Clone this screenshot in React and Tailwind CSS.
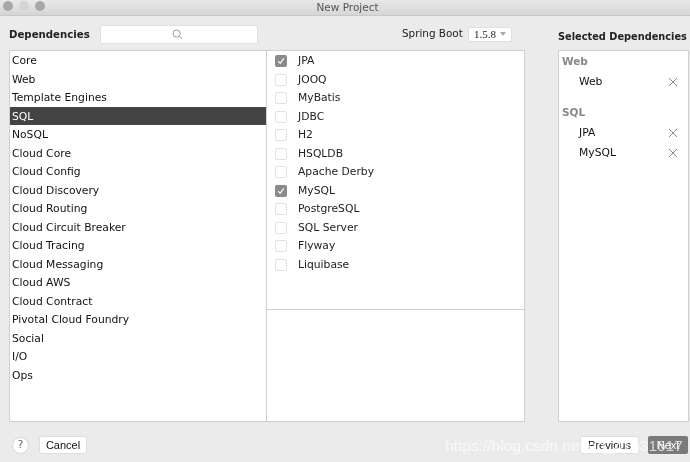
const font = { fontFamily: '"DejaVu Sans", sans-serif' };

const categories = ["Core", "Web", "Template Engines", "SQL", "NoSQL", "Cloud Core", "Cloud Config", "Cloud Discovery", "Cloud Routing", "Cloud Circuit Breaker", "Cloud Tracing", "Cloud Messaging", "Cloud AWS", "Cloud Contract", "Pivotal Cloud Foundry", "Social", "I/O", "Ops"];

const deps = [
  ["JPA", true],
  ["JOOQ", false],
  ["MyBatis", false],
  ["JDBC", false],
  ["H2", false],
  ["HSQLDB", false],
  ["Apache Derby", false],
  ["MySQL", true],
  ["PostgreSQL", false],
  ["SQL Server", false],
  ["Flyway", false],
  ["Liquibase", false],
];

function Checkbox({ checked }) {
  if (checked) {
    return (
      <span className="w-[12px] h-[12px] rounded-[2px] bg-[#8a8a8a] flex items-center justify-center shrink-0">
        <svg width="8" height="8" viewBox="0 0 8 8" fill="none" stroke="#fff" strokeWidth="1.2">
          <path d="M1.2 4.2 L3.2 6.3 L6.8 1.4" />
        </svg>
      </span>
    );
  }
  return <span className="w-[12px] h-[12px] rounded-[2px] bg-white border border-[#e2e2e2] shrink-0" />;
}

function Cross() {
  return (
    <svg width="10" height="10" viewBox="0 0 10 10" stroke="#8c8c8c" strokeWidth="1" fill="none">
      <path d="M1 1 L9 9 M9 1 L1 9" />
    </svg>
  );
}

function SelectedRow({ name }) {
  return (
    <div className="h-[20px] flex items-center justify-between pl-[20px] pr-[10px] text-[10.75px] text-[#111]">
      <span>{name}</span>
      <Cross />
    </div>
  );
}

export default function App() {
  return (
    <div style={font} className="relative w-[690px] h-[462px] overflow-hidden bg-[#ebebeb] text-[#111] blur-[0.3px]">
      <div className="relative h-[16px] bg-gradient-to-b from-[#e8e8e8] to-[#d6d6d6] border-b border-[#c8c8c8] flex items-center justify-center pl-[5px] text-[10.5px] text-[#555]">
        <div className="absolute left-[3px] top-[1px] flex gap-[6px]">
          <span className="w-[10px] h-[10px] rounded-full bg-[#a8a8a8]" />
          <span className="w-[10px] h-[10px] rounded-full bg-[#d4d4d4]" />
          <span className="w-[10px] h-[10px] rounded-full bg-[#a8a8a8]" />
        </div>
        New Project
      </div>

      <div className="h-[34px] flex items-center pl-[9px] pt-[2px] whitespace-nowrap">
        <span className="w-[90px] shrink-0 mt-[2px] text-[10.2px] font-bold text-[#222]">Dependencies</span>
        <div className="ml-[1px] w-[158px] shrink-0 h-[19px] bg-white rounded-[2px] border border-[#e0e0e0] flex items-center justify-center pr-[3px]">
          <svg width="11" height="11" viewBox="0 0 11 11" fill="none" stroke="#9a9a9a" strokeWidth="1">
            <circle cx="4.6" cy="4.6" r="3.6" />
            <path d="M7.3 7.3 L10 10" />
          </svg>
        </div>
        <span className="ml-[144px] w-[60px] shrink-0 text-[10.4px] text-[#222]">Spring Boot</span>
        <div className="ml-[6px] w-[44px] shrink-0 h-[15px] bg-white rounded-[2px] border border-[#e0e0e0] flex items-center justify-between pl-[5px] pr-[5px] text-[#222]" style={{ fontFamily: '"Liberation Serif", serif' }}>
          <span className="text-[11px]">1.5.8</span>
          <span className="w-0 h-0 border-l-[3px] border-r-[3px] border-t-[4px] border-l-transparent border-r-transparent border-t-[#aaa]" />
        </div>
        <span className="ml-[46px] shrink-0 mt-[6px] text-[9.8px] font-bold text-[#222]">Selected Dependencies</span>
      </div>

      <div className="flex pl-[9px] h-[372px]">
        <div className="w-[516px] flex bg-white border border-[#cfcfcf]">
          <div className="w-[257px] border-r border-[#cfcfcf]">
            {categories.map((c) => (
              <div key={c} className={`h-[18.5px] pt-[2px] flex items-center pl-[2px] text-[10.75px] ${c === "SQL" ? "bg-[#444444] text-white" : "text-[#111]"}`}>
                {c}
              </div>
            ))}
          </div>
          <div className="flex-1 flex flex-col">
            <div className="h-[259px] border-b border-[#cfcfcf] pt-[1px]">
              {deps.map(([name, checked]) => (
                <div key={name} className="h-[18.5px] flex items-center pl-[8px] gap-[11px] text-[10.75px] text-[#222]">
                  <Checkbox checked={checked} />
                  {name}
                </div>
              ))}
            </div>
          </div>
        </div>

        <div className="ml-[33px] w-[131px] bg-white border border-[#cfcfcf] pt-[3px]">
          <div className="h-[16px] flex items-center pl-[3px] text-[10.5px] font-bold text-[#888]">Web</div>
          <div className="mt-[2px]">
            <SelectedRow name="Web" />
          </div>
          <div className="h-[16px] mt-[13px] flex items-center pl-[3px] text-[10.5px] font-bold text-[#888]">SQL</div>
          <div className="mt-[2px]">
            <SelectedRow name="JPA" />
            <SelectedRow name="MySQL" />
          </div>
        </div>
      </div>

      <div className="h-[40px] flex items-center pl-[12px] pt-[6px] text-[11px] text-[#111]">
        <span className="w-[17px] h-[17px] rounded-full bg-white border border-[#d4d4d4] flex items-center justify-center text-[#666] text-[11px]">?</span>
        <span className="ml-[10px] w-[48px] h-[18px] bg-white rounded-[2px] border border-[#dedede] flex items-center justify-center" style={{ fontFamily: '"Liberation Sans", sans-serif' }}>Cancel</span>
        <span className="ml-[493px] w-[59px] h-[18px] bg-white rounded-[2px] border border-[#dedede] flex items-center justify-center" style={{ fontFamily: '"Liberation Sans", sans-serif' }}>Previous</span>
        <span className="ml-[9px] w-[40px] h-[18px] bg-[#7a7a7a] rounded-[2px] flex items-center justify-center text-white" style={{ fontFamily: '"Liberation Sans", sans-serif' }}>Next</span>
      </div>

      <div className="absolute left-[445px] top-[434px] text-[15.5px] text-white/70 whitespace-nowrap pointer-events-none" style={{ fontFamily: '"Liberation Sans", sans-serif' }}>
        https://blog.csdn.net/qq_41631617
      </div>
    </div>
  );
}
